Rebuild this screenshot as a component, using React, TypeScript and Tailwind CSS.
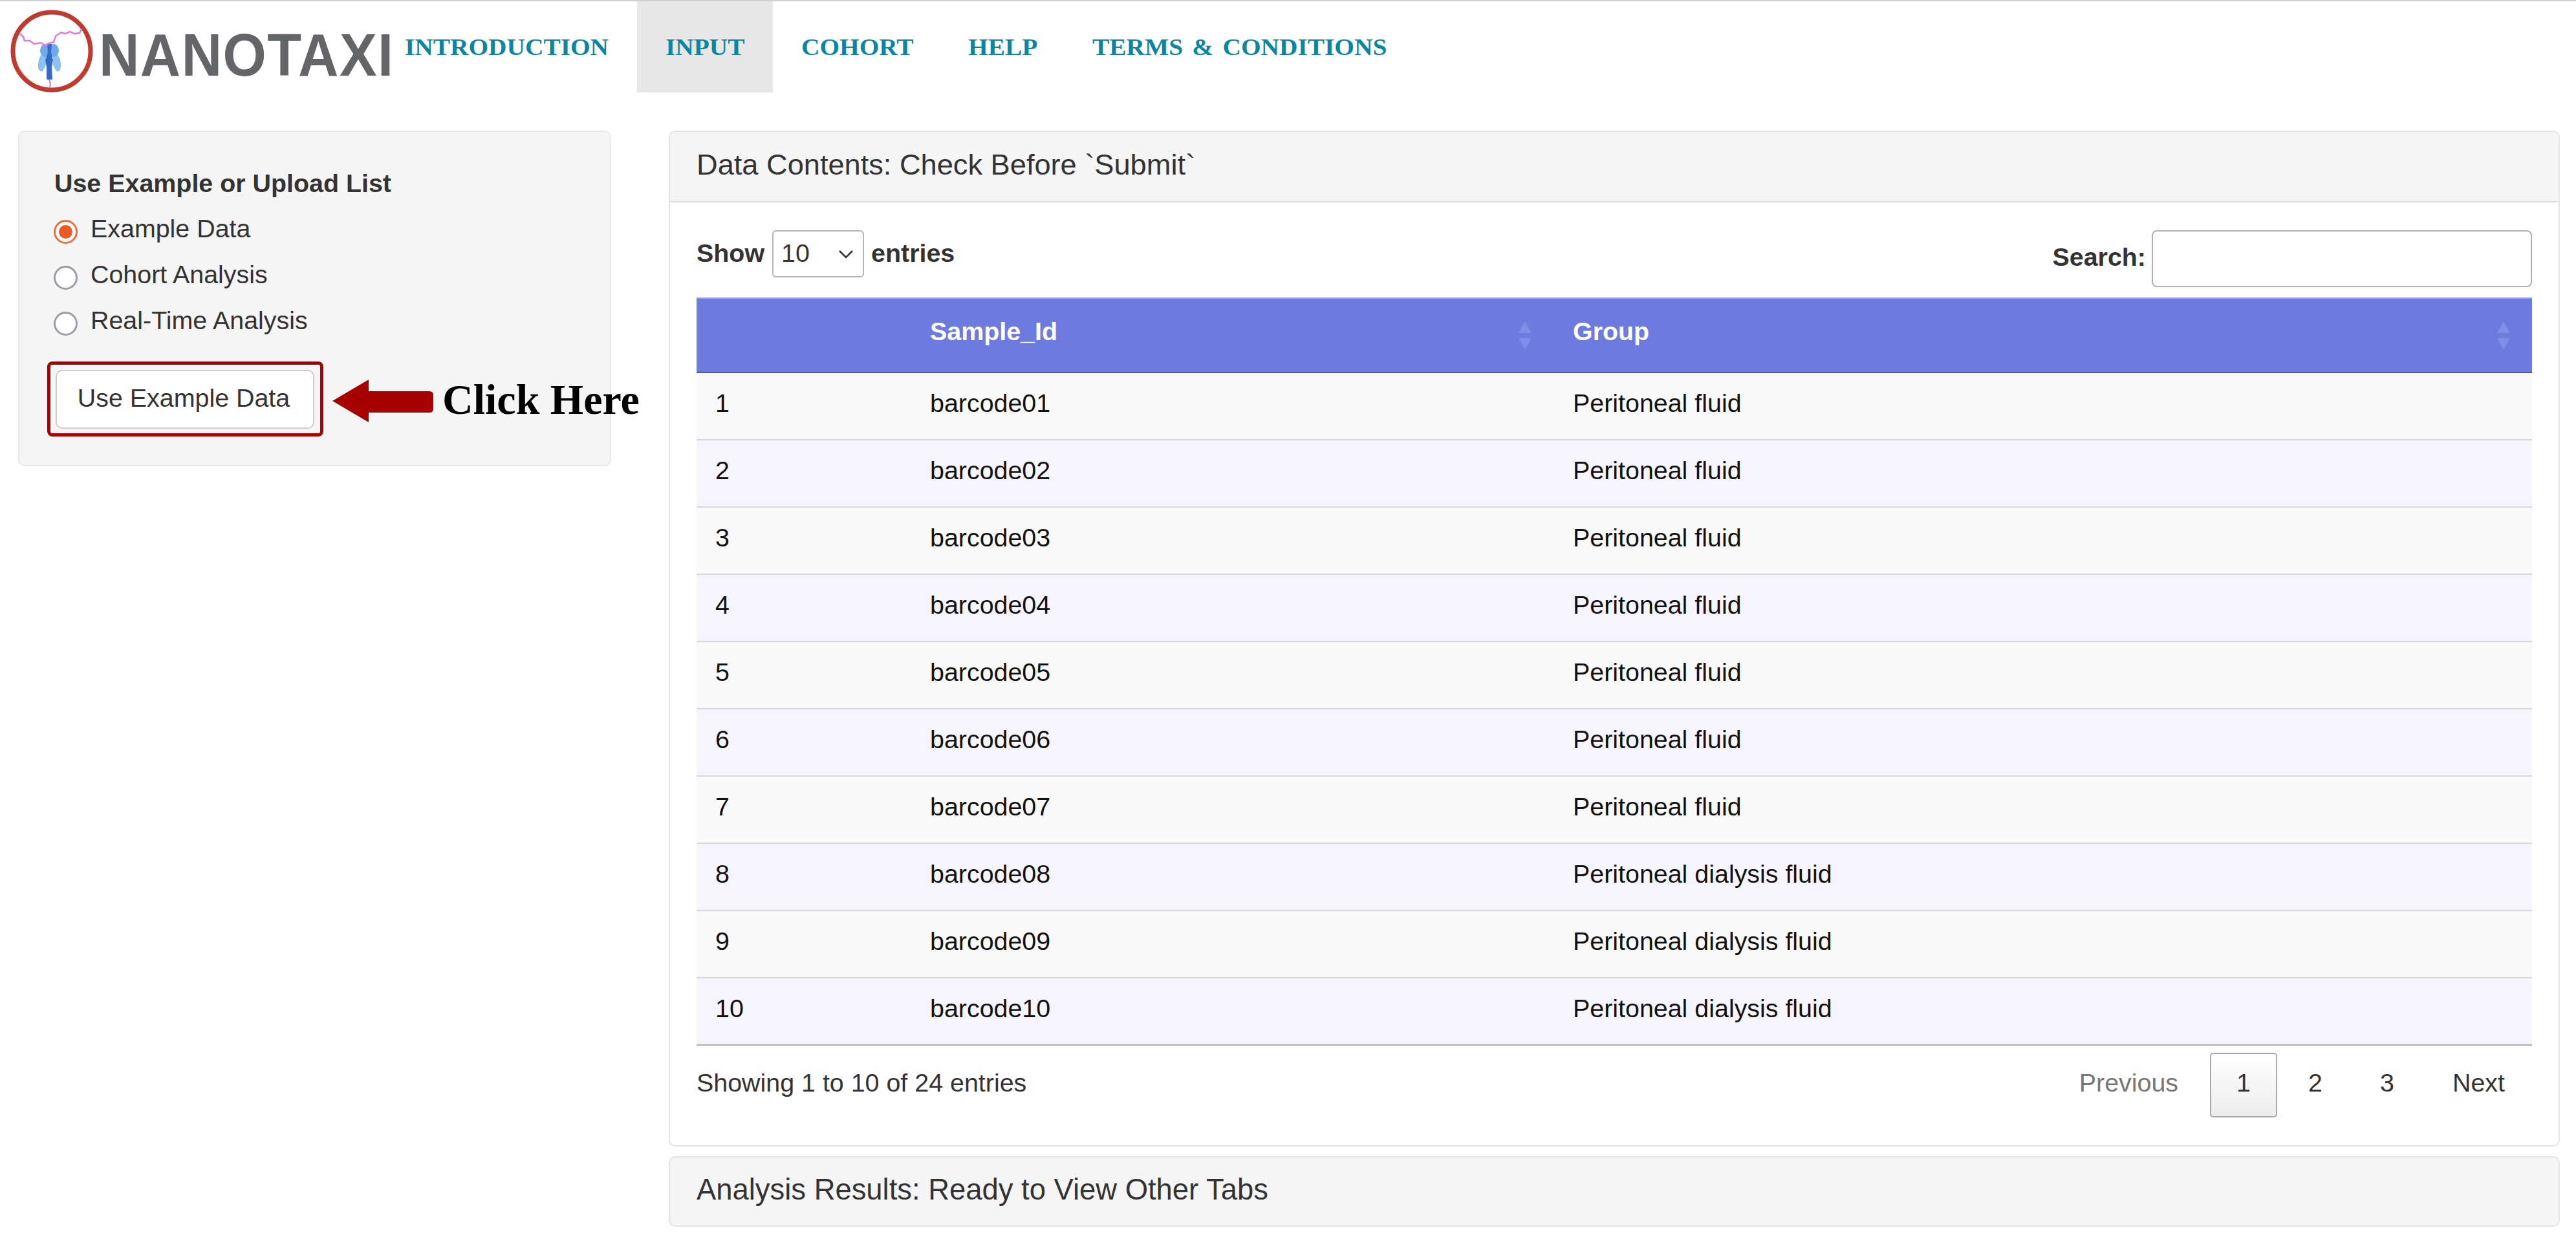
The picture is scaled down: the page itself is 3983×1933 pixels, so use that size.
const rows = [
  ['1', 'barcode01', 'Peritoneal fluid'],
  ['2', 'barcode02', 'Peritoneal fluid'],
  ['3', 'barcode03', 'Peritoneal fluid'],
  ['4', 'barcode04', 'Peritoneal fluid'],
  ['5', 'barcode05', 'Peritoneal fluid'],
  ['6', 'barcode06', 'Peritoneal fluid'],
  ['7', 'barcode07', 'Peritoneal fluid'],
  ['8', 'barcode08', 'Peritoneal dialysis fluid'],
  ['9', 'barcode09', 'Peritoneal dialysis fluid'],
  ['10', 'barcode10', 'Peritoneal dialysis fluid'],
]

const navItems = [
  { label: 'INTRODUCTION', width: 'w-[403px]' },
  { label: 'INPUT', width: 'w-[210px] bg-[#e7e7e7]' },
  { label: 'COHORT', width: 'w-[258px]' },
  { label: 'HELP', width: 'w-[192px]' },
  { label: 'TERMS & CONDITIONS', width: 'w-[543px]' },
]

function Logo() {
  return (
    <svg viewBox="0 0 130 130" className="h-[130px] w-[130px] shrink-0">
      <circle cx="64" cy="66" r="60" fill="#fff" stroke="#c13a2f" strokeWidth="7" />
      <path d="M60 110 Q63 116 61 122" fill="none" stroke="#c77fd6" strokeWidth="2" />
      <path d="M51 68 Q42 76 43 92 Q45 99 50 97 L55 88 L55 68 Z" fill="#8ec2ee" />
      <path d="M70 68 Q79 76 78 92 Q76 99 71 97 L66 88 L66 68 Z" fill="#8ec2ee" />
      <ellipse cx="54" cy="65" rx="8" ry="10" fill="#6eaae6" />
      <ellipse cx="67" cy="65" rx="8" ry="10" fill="#6eaae6" />
      <path d="M57 55 L64 55 L63 68 L66 80 L64 90 L65 110 L56 110 L56 90 L54 80 L58 68 Z" fill="#3569c4" />
      <path
        d="M15 39 L20 44 L22 50 L30 50 L37 55 L47 53 L53 57 L60 54 L67 52 L70 43 L78 37 L85 39 L92 36 L99 39 L107 38 L110 32"
        fill="none"
        stroke="#e27be0"
        strokeWidth="2.5"
      />
    </svg>
  )
}

function SortIcon() {
  return (
    <span className="flex flex-col gap-[8px]">
      <svg viewBox="0 0 20 18" className="h-[18px] w-[20px]">
        <path d="M10 0 L20 18 L0 18 Z" fill="#808de9" />
      </svg>
      <svg viewBox="0 0 20 18" className="h-[18px] w-[20px]">
        <path d="M0 0 L20 0 L10 18 Z" fill="#808de9" />
      </svg>
    </span>
  )
}

function Radio({ label, checked }: { label: string; checked?: boolean }) {
  return (
    <label className="flex h-[71px] items-center">
      <span
        className={`mt-[12px] h-[37px] w-[37px] shrink-0 rounded-full border-[3px] bg-white ${
          checked ? 'border-[#e9703f] p-[5px]' : 'border-[#9c9ca8]'
        }`}
      >
        {checked && <span className="block h-full w-full rounded-full bg-[#eb5a24]" />}
      </span>
      <span className="ml-[20px]">{label}</span>
    </label>
  )
}

export default function App() {
  return (
    <div className="min-h-[1933px] bg-white font-['Liberation_Sans',Arial,sans-serif] text-[39.4px] leading-[56px] text-[#333]">
      <header className="flex h-[143px] border-t-2 border-[#cfcfcf] bg-white">
        <div className="flex h-full w-[582px] shrink-0 items-start whitespace-nowrap pl-[16px] pt-[11px]">
          <Logo />
          <span className="ml-[7px] mt-[19px] inline-block origin-left scale-x-[0.93] text-[93px] font-bold leading-[106px] tracking-[1.5px] text-[#636569]">
            NANOTAXI
          </span>
        </div>
        <nav className="flex">
          {navItems.map((item) => (
            <a
              key={item.label}
              className={`flex h-full items-center pl-[44px] font-['Liberation_Serif',serif] text-[35px] font-bold text-[#0a86a0] ${item.width}`}
            >
              <span className="mt-[2px] inline-block origin-left scale-x-[1.125] whitespace-nowrap [word-spacing:4px]">
                {item.label}
              </span>
            </a>
          ))}
        </nav>
      </header>

      <div className="flex items-start pl-[28px] pr-[25px] pt-[59px]">
        <aside className="h-[519px] w-[917px] shrink-0 rounded-[10px] border-2 border-[#e8e8e8] bg-[#f5f5f5] pl-[53px] pt-[51px]">
          <div className="mb-[6px] pl-[1px] font-bold">Use Example or Upload List</div>
          <Radio label="Example Data" checked />
          <Radio label="Cohort Analysis" />
          <Radio label="Real-Time Analysis" />
          <div className="ml-[-10px] mt-[29px] flex items-center whitespace-nowrap">
            <div className="h-[116px] w-[427px] shrink-0 rounded-[8px] border-[5px] border-[#a80000] p-[8px]">
              <button className="h-[91px] w-[400px] rounded-[10px] border-2 border-[#cccccc] bg-white pb-[5px] pr-[4px] text-[#333]">
                Use Example Data
              </button>
            </div>
            <svg viewBox="0 0 156 66" className="ml-[14px] mt-[6px] h-[66px] w-[156px] shrink-0">
              <path
                d="M0 33 L56 0 L56 18 L150 18 Q156 18 156 24 L156 45 Q156 51 150 51 L56 51 L56 66 Z"
                fill="#a80000"
              />
            </svg>
            <span className="ml-[14px] mt-[2px] font-['Liberation_Serif',serif] text-[66px] font-bold text-black">
              Click Here
            </span>
          </div>
        </aside>

        <main className="ml-[89px] min-w-0 flex-1">
          <section className="rounded-[10px] border-2 border-[#e4e4e4] bg-white">
            <div className="flex h-[109px] items-center rounded-t-[8px] border-b-2 border-[#dedede] bg-[#f5f5f5] pb-[5px] pl-[41px] text-[45.2px]">
              Data Contents: Check Before `Submit`
            </div>
            <div className="px-[41px] pt-[43px]">
              <div className="flex h-[104px] items-start justify-between">
                <div className="flex h-[73px] items-center font-bold">
                  <span className="mb-[4px]">Show</span>
                  <span className="ml-[12px] flex h-[73px] w-[142px] items-center justify-between rounded-[6px] border-2 border-[#b4b4b4] pl-[12px] pr-[14px] font-normal">
                    <span className="mb-[4px]">10</span>
                    <svg viewBox="0 0 24 14" className="h-[14px] w-[24px]">
                      <path d="M2 2 L12 12 L22 2" fill="none" stroke="#333" strokeWidth="2.5" />
                    </svg>
                  </span>
                  <span className="mb-[4px] ml-[11px]">entries</span>
                </div>
                <div className="flex h-[88px] items-center font-bold">
                  <span className="mb-[6px]">Search:</span>
                  <input className="ml-[9px] h-[88px] w-[588px] rounded-[8px] border-2 border-[#b0b0b0] bg-white" />
                </div>
              </div>

              <table className="w-full table-fixed border-collapse text-[#111]">
                <colgroup>
                  <col className="w-[332px]" />
                  <col className="w-[994px]" />
                  <col />
                </colgroup>
                <thead>
                  <tr className="h-[115px] border-b-2 border-b-[#4f5ab2] border-t-2 border-t-[#99a3ec] bg-[#6d7ade] text-left font-bold text-white">
                    <th className="pl-[29px]" />
                    <th className="pl-[29px] pr-[35px]">
                      <div className="flex items-center justify-between">
                        <span className="mb-[14px]">Sample_Id</span>
                        <SortIcon />
                      </div>
                    </th>
                    <th className="pl-[29px] pr-[34px]">
                      <div className="flex items-center justify-between">
                        <span className="mb-[14px]">Group</span>
                        <SortIcon />
                      </div>
                    </th>
                  </tr>
                </thead>
                <tbody>
                  {rows.map(([id, sample, group], i) => (
                    <tr
                      key={id}
                      className={`h-[104px] border-b-2 ${i === rows.length - 1 ? 'border-[#a9a9ae]' : 'border-[#d6d6dc]'} ${
                        i % 2 === 0 ? 'bg-[#f9f9f9]' : 'bg-[#f6f5fe]'
                      }`}
                    >
                      <td className="pb-[10px] pl-[29px]">{id}</td>
                      <td className="pb-[10px] pl-[29px]">{sample}</td>
                      <td className="pb-[10px] pl-[29px]">{group}</td>
                    </tr>
                  ))}
                </tbody>
              </table>

              <div className="flex h-[154px] items-start justify-between pt-[11px]">
                <div className="mt-[18px]">Showing 1 to 10 of 24 entries</div>
                <div className="flex items-start gap-[7px]">
                  <a className="flex h-[100px] items-center px-[42px] pb-[8px] text-[#777]">Previous</a>
                  <a className="flex h-[100px] w-[104px] items-center justify-center rounded-[5px] border-2 border-[#a9a9a9] bg-gradient-to-b from-white to-[#ececec] pb-[8px]">
                    1
                  </a>
                  <a className="flex h-[100px] w-[104px] items-center justify-center pb-[8px]">2</a>
                  <a className="flex h-[100px] w-[104px] items-center justify-center pb-[8px]">3</a>
                  <a className="flex h-[100px] items-center px-[42px] pb-[8px]">Next</a>
                </div>
              </div>
            </div>
          </section>

          <section className="mt-[15px] flex h-[109px] items-center rounded-[10px] border-2 border-[#e4e4e4] bg-[#f5f5f5] pb-[6px] pl-[41px] text-[45.4px]">
            Analysis Results: Ready to View Other Tabs
          </section>
        </main>
      </div>
    </div>
  )
}
